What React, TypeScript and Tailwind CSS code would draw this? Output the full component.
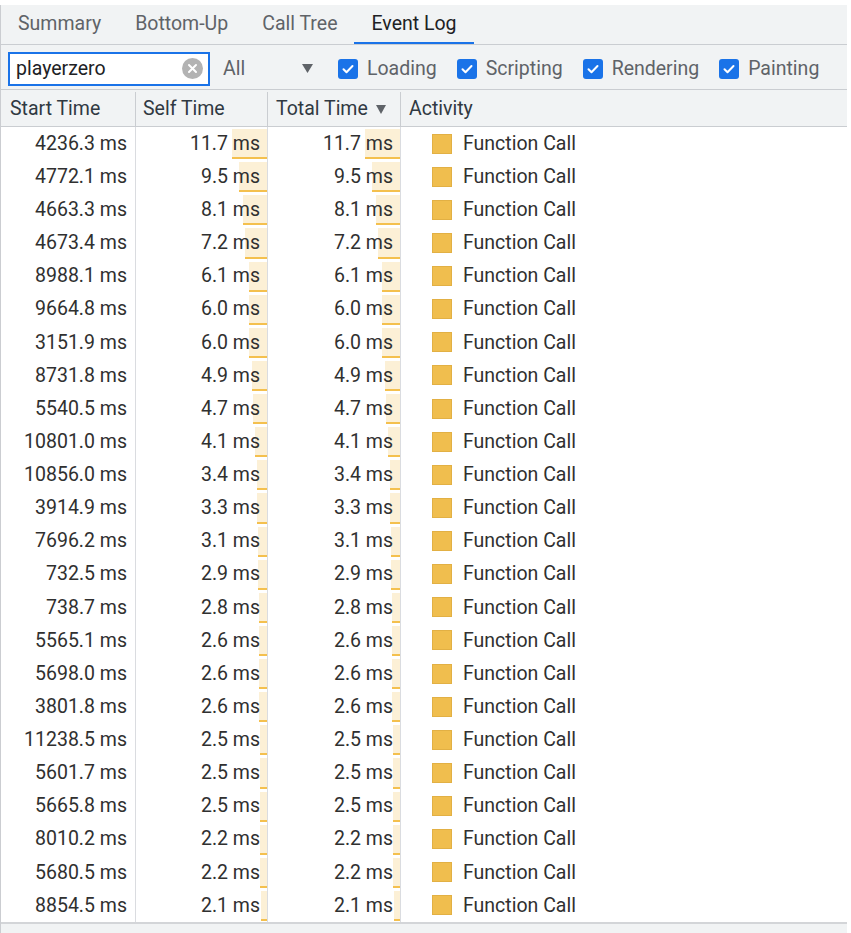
const rows: [string, number][] = [
  ["4236.3", 11.7],
  ["4772.1", 9.5],
  ["4663.3", 8.1],
  ["4673.4", 7.2],
  ["8988.1", 6.1],
  ["9664.8", 6.0],
  ["3151.9", 6.0],
  ["8731.8", 4.9],
  ["5540.5", 4.7],
  ["10801.0", 4.1],
  ["10856.0", 3.4],
  ["3914.9", 3.3],
  ["7696.2", 3.1],
  ["732.5", 2.9],
  ["738.7", 2.8],
  ["5565.1", 2.6],
  ["5698.0", 2.6],
  ["3801.8", 2.6],
  ["11238.5", 2.5],
  ["5601.7", 2.5],
  ["5665.8", 2.5],
  ["8010.2", 2.2],
  ["5680.5", 2.2],
  ["8854.5", 2.1],
];

const tabs = ["Summary", "Bottom-Up", "Call Tree", "Event Log"];
const filters = ["Loading", "Scripting", "Rendering", "Painting"];

function Checkbox() {
  return (
    <span className="flex h-[20px] w-[20px] items-center justify-center rounded-[3px] bg-[#1a73e8]">
      <svg width="14" height="14" viewBox="0 0 14 14">
        <path d="M2.5 7.2l3 3 6-6.2" fill="none" stroke="white" strokeWidth="2" strokeLinecap="round" strokeLinejoin="round" />
      </svg>
    </span>
  );
}

function TimeCell({ value }: { value: number }) {
  return (
    <div className="relative flex items-center justify-end border-r border-[#dadce0] pr-[7px]">
      <div
        className="absolute right-0 top-[2px] bottom-[1px] border-b-2 border-[#f4c04e] bg-[#fcf0d6]"
        style={{ width: `${value * 3}px` }}
      />
      <span className="relative">{value.toFixed(1)} ms</span>
    </div>
  );
}

export default function App() {
  return (
    <div className="h-[933px] w-[851px] bg-white pt-[5px] font-['Roboto',sans-serif] text-[19.5px] leading-none">
      <div className="flex h-[928px] w-[847px] flex-col border-l border-[#cbcdd1] bg-[#f1f3f4]">
        {/* tabs */}
        <div className="flex h-[40px] shrink-0 border-b border-[#cacdd1]">
          {tabs.map((t) => {
            const active = t === "Event Log";
            return (
              <div
                key={t}
                className={`relative flex items-center px-[17px] pb-[2px] ${active ? "text-[#202124]" : "text-[#5f6368]"}`}
              >
                {t}
                {active && <div className="absolute bottom-0 left-0 right-0 h-[2px] bg-[#1a73e8]" />}
              </div>
            );
          })}
        </div>

        {/* toolbar */}
        <div className="flex h-[45px] shrink-0 items-center border-b border-[#cacdd1] pt-[3px]">
          <div className="ml-[7px] flex h-[34px] w-[202px] items-center justify-between border-2 border-[#1a73e8] bg-white pl-[6px] pr-[5px] text-[#202124]">
            <span>playerzero</span>
            <svg width="21" height="21" viewBox="0 0 21 21">
              <circle cx="10.5" cy="10.5" r="10.5" fill="#b3b3b3" />
              <path d="M7 7l7 7M14 7l-7 7" stroke="white" strokeWidth="2" strokeLinecap="round" />
            </svg>
          </div>
          <div className="ml-[13px] flex w-[90px] items-center justify-between text-[#5f6368]">
            <span>All</span>
            <svg width="11" height="9" viewBox="0 0 11 9">
              <path d="M0 0h11L5.5 9z" fill="#5f6368" />
            </svg>
          </div>
          <div className="ml-[25px] flex items-center gap-[20px]">
            {filters.map((f) => (
              <label key={f} className="flex items-center gap-[9px] text-[#5f6368]">
                <Checkbox />
                {f}
              </label>
            ))}
          </div>
        </div>

        {/* header */}
        <div className="grid h-[37px] shrink-0 grid-cols-[135px_132px_133px_1fr] border-b border-[#cacdd1] pt-[2px] text-[#303942]">
          <div className="flex items-center border-r border-[#cacdd1] pl-[9px]">Start Time</div>
          <div className="flex items-center border-r border-[#cacdd1] pl-[7px]">Self Time</div>
          <div className="flex items-center gap-[8px] border-r border-[#cacdd1] pl-[8px]">
            Total Time
            <svg width="10" height="9" viewBox="0 0 10 9">
              <path d="M0 0h10L5 9z" fill="#5f6368" />
            </svg>
          </div>
          <div className="flex items-center pl-[8px]">Activity</div>
        </div>

        {/* rows */}
        <div className="shrink-0 bg-white text-[#303030]">
          {rows.map(([start, v], i) => (
            <div key={i} className="grid h-[33.125px] grid-cols-[135px_132px_133px_1fr]">
              <div className="flex items-center justify-end border-r border-[#dadce0] pr-[8px]">{start} ms</div>
              <TimeCell value={v} />
              <TimeCell value={v} />
              <div className="flex items-center gap-[11px] pl-[31px]">
                <span className="h-[20px] w-[20px] border border-[#e2b044] bg-[#f0be4e]" />
                Function Call
              </div>
            </div>
          ))}
        </div>
        <div className="h-[2px] shrink-0 bg-[#d3d5d8]" />
      </div>
    </div>
  );
}
